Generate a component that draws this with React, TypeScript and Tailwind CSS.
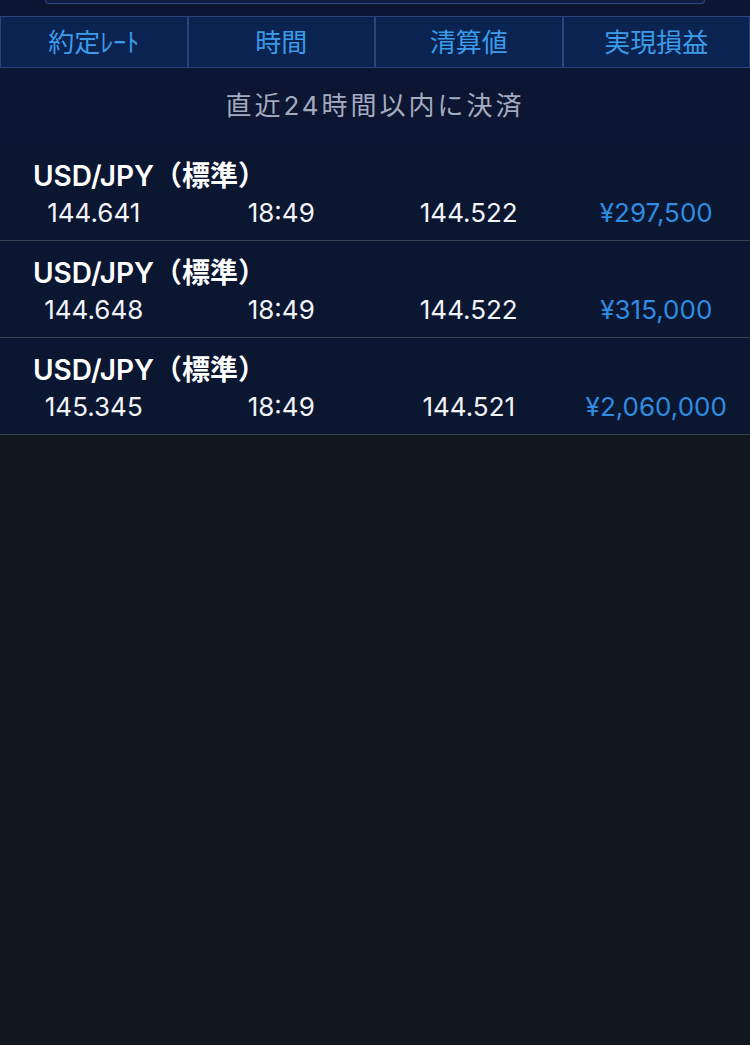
const rows = [
  { rate: "144.641", time: "18:49", settle: "144.522", pnl: "¥297,500" },
  { rate: "144.648", time: "18:49", settle: "144.522", pnl: "¥315,000" },
  { rate: "145.345", time: "18:49", settle: "144.521", pnl: "¥2,060,000" },
];

const headers = ["約定ﾚｰﾄ", "時間", "清算値", "実現損益"];

const font = "font-['Inter','Noto_Sans_CJK_JP',sans-serif]";

export default function App() {
  return (
    <div className={`min-h-[1045px] w-[750px] bg-[#11171e] ${font}`}>
      <div className="bg-[#0c1531]">
        {/* bottom edge of segmented control */}
        <div className="mx-[45px] h-[4px] rounded-b-[14px] border-x border-b border-[#2d4a85] bg-[#101c40]" />

        {/* column header */}
        <div className="mt-[12px] grid grid-cols-4">
          {headers.map((h) => (
            <div
              key={h}
              className="flex h-[52px] items-center justify-center border border-[#26457c] bg-[#0a2350] text-[26px] text-[#3b9be8]"
            >
              {h}
            </div>
          ))}
        </div>

        <div className="flex h-[76px] items-center justify-center pb-[2px] text-[26px] tracking-[3px] text-[#a3abbf]">
          直近24時間以内に決済
        </div>

        {rows.map((r, i) => (
          <div key={i} className="h-[97px] border-b border-[#3b4150] bg-[#0b1631]">
            <div className="pl-[33px] pt-[15px] text-[28px] font-semibold leading-[34px] text-white">
              USD/JPY（標準）
            </div>
            <div className="grid grid-cols-4 pt-[2px] text-[26px] leading-[36px] text-[#f2f4f8]">
              <div className="text-center">{r.rate}</div>
              <div className="text-center">{r.time}</div>
              <div className="text-center">{r.settle}</div>
              <div className="text-center text-[#2f8ce0]">{r.pnl}</div>
            </div>
          </div>
        ))}
      </div>
    </div>
  );
}
